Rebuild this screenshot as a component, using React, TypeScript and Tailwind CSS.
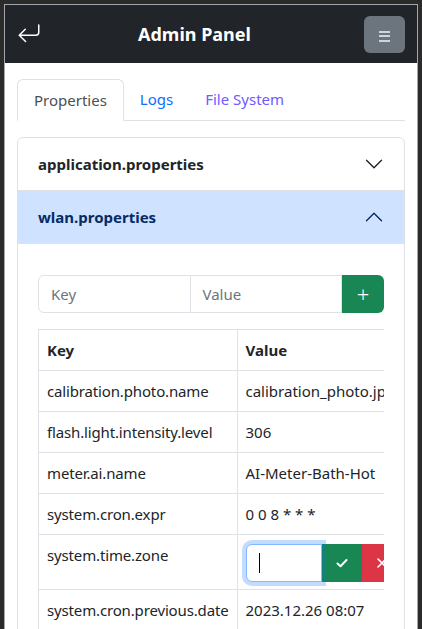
import React from 'react';
import { BsArrowReturnLeft } from 'react-icons/bs';

const rows: [string, string][] = [
  ['calibration.photo.name', 'calibration_photo.jpg'],
  ['flash.light.intensity.level', '306'],
  ['meter.ai.name', 'AI-Meter-Bath-Hot'],
  ['system.cron.expr', '0 0 8 * * *'],
  ['system.time.zone', ''],
  ['system.cron.previous.date', '2023.12.26 08:07'],
];

const Chevron = ({ up, color }: { up?: boolean; color: string }) => (
  <svg viewBox="0 0 16 16" className={`w-5 h-5 ${up ? 'rotate-180' : ''}`}>
    <path fill="none" stroke={color} strokeWidth="1.1" strokeLinecap="round" strokeLinejoin="round" d="M2 5L8 11L14 5" />
  </svg>
);

export default function App() {
  return (
    <div className="min-h-screen bg-[#2b2b2b] pt-1 px-1 font-['Noto_Sans',sans-serif] text-[15px] leading-6 text-[#212529]">
      <div className="border border-b-0 border-[#a3a7ab] bg-white">
        {/* header */}
        <div className="h-[58px] bg-[#212529] flex items-center px-3">
          <BsArrowReturnLeft className="w-6 h-6 text-white" />
          <h1 className="ml-[97px] text-[18px] font-bold text-white">Admin Panel</h1>
          <button className="ml-auto w-[41px] h-[37px] rounded-md bg-[#6c757d] flex flex-col items-center justify-center gap-[2.5px] pt-1">
            <span className="block w-[11px] h-[2px] bg-[#ced4da]" />
            <span className="block w-[11px] h-[2px] bg-[#ced4da]" />
            <span className="block w-[11px] h-[2px] bg-[#ced4da]" />
          </button>
        </div>

        <div className="px-3 pt-4">
          {/* tabs */}
          <div className="flex border-b border-[#dee2e6]">
            <div className="px-4 py-2 border border-[#dee2e6] border-b-white -mb-px rounded-t-md bg-white text-[#495057]">Properties</div>
            <div className="px-4 py-2 text-[#0d6efd]">Logs</div>
            <div className="px-4 py-2 text-[#6f5bff]">File System</div>
          </div>

          {/* accordion */}
          <div className="mt-4 border border-[#dee2e6] rounded-md overflow-hidden">
            <div className="flex items-center justify-between px-5 py-[14px] border-b border-[#dee2e6]">
              <span className="font-bold">application.properties</span>
              <Chevron color="#212529" />
            </div>
            <div className="flex items-center justify-between px-5 py-[14px] bg-[#cfe2ff] text-[#052c65] border-b border-[#dee2e6]">
              <span className="font-bold">wlan.properties</span>
              <Chevron up color="#052c65" />
            </div>
            <div className="px-5 pt-[31px] pb-4">
              <div className="flex h-[38px]">
                <div className="flex-1 border border-[#dee2e6] rounded-l-md px-3 flex items-center text-[#6c757d]">Key</div>
                <div className="flex-1 border border-l-0 border-[#dee2e6] px-3 flex items-center text-[#6c757d]">Value</div>
                <button className="w-[42px] bg-[#198754] rounded-r-md flex items-center justify-center text-white text-[22px] font-light">+</button>
              </div>

              <div className="mt-4 overflow-hidden">
                <table className="border-collapse whitespace-nowrap">
                  <thead>
                    <tr>
                      <th className="w-[199px] border border-[#dee2e6] text-left px-2 py-2 font-bold">Key</th>
                      <th className="border border-[#dee2e6] text-left px-2 py-2 font-bold">Value</th>
                    </tr>
                  </thead>
                  <tbody>
                    {rows.map(([k, v]) => (
                      <tr key={k}>
                        <td className="border border-[#dee2e6] px-2 py-2 align-top tracking-[-0.01em]">{k}</td>
                        <td className="border border-[#dee2e6] px-2 py-2 align-top">
                          {k === 'system.time.zone' ? (
                            <div className="flex h-[38px] pt-px">
                              <div className="relative z-10 w-[76px] h-[38px] border border-[#86b7fe] rounded-l-md bg-white shadow-[0_0_0_4px_rgba(13,110,253,0.25)] flex items-center pl-3">
                                <span className="block w-px h-5 bg-black" />
                              </div>
                              <button className="w-10 h-[38px] bg-[#198754] flex items-center justify-center">
                                <svg viewBox="0 0 16 16" className="w-4 h-4" fill="none" stroke="white" strokeWidth="2" strokeLinecap="round" strokeLinejoin="round">
                                  <path d="M3.5 8.5L6.5 11.2L12.5 5" />
                                </svg>
                              </button>
                              <button className="w-10 h-[38px] bg-[#dc3545] flex items-center justify-center rounded-r-md">
                                <svg viewBox="0 0 16 16" className="w-4 h-4" fill="none" stroke="white" strokeWidth="1.6" strokeLinecap="round">
                                  <path d="M4 4L12 12M12 4L4 12" />
                                </svg>
                              </button>
                            </div>
                          ) : (
                            v
                          )}
                        </td>
                      </tr>
                    ))}
                  </tbody>
                </table>
              </div>
            </div>
          </div>
        </div>
      </div>
    </div>
  );
}
